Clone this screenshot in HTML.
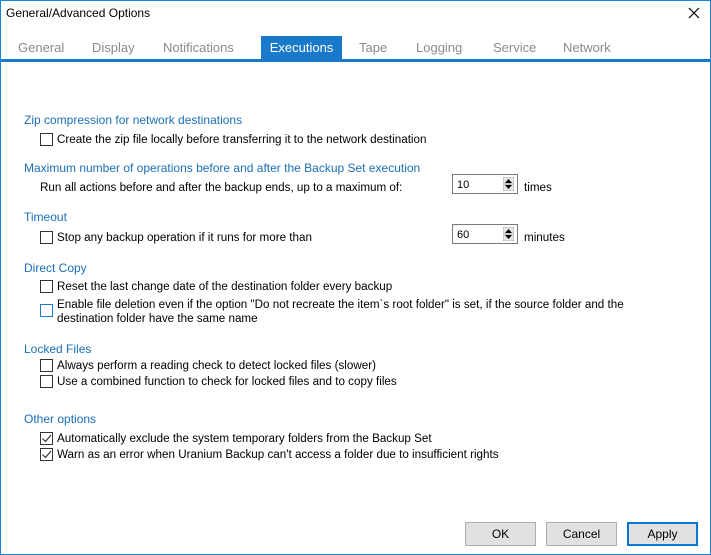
<!DOCTYPE html><html><head><style>
body{margin:0;width:711px;height:555px;overflow:hidden;font-family:"Liberation Sans",sans-serif;background:#fff;position:relative}
.win{position:absolute;left:0;top:0;width:709px;height:553px;border:1px solid #1883d7}
.a{position:absolute;white-space:nowrap}
.t{font-size:11.65px;color:#000;margin-top:1px}
.h{font-size:12px;color:#1a6fb9}
.tab{position:absolute;top:36px;height:24px;line-height:24px;font-size:13px;color:#8a8a8a}
.cb{position:absolute;width:11px;height:11px;border:1px solid #333;background:#fff}
.cb svg{position:absolute;left:0;top:0}
.spin{position:absolute;width:66px;height:20px;border:1px solid #7a7a7a;font-size:11px;line-height:20px;padding-left:4px;box-sizing:border-box}
.arr{position:absolute;right:3px;top:2px;width:11px;height:14px}
.btn{position:absolute;top:522px;height:24px;width:71px;border:1px solid #adadad;background:#e1e1e1;font-size:12px;text-align:center;line-height:22px;box-sizing:border-box}
</style></head><body><div class="win"></div>
<div class="a" style="left:6px;top:6px;font-size:12px">General/Advanced Options</div>
<svg class="a" style="left:688px;top:7px" width="12" height="12"><path d="M1 1L11 11M11 1L1 11" stroke="#000" stroke-width="1.2"/></svg>
<div class="tab" style="left:18px">General</div>
<div class="tab" style="left:92px">Display</div>
<div class="tab" style="left:163px">Notifications</div>
<div class="tab" style="left:261px;width:81px;background:#1979ca;color:#fff;text-align:center">Executions</div>
<div class="tab" style="left:359px">Tape</div>
<div class="tab" style="left:416px">Logging</div>
<div class="tab" style="left:493px">Service</div>
<div class="tab" style="left:563px">Network</div>
<div class="a" style="left:1px;top:59px;width:709px;height:3px;background:#1979ca"></div>

<div class="a h" style="left:24px;top:113px">Zip compression for network destinations</div>
<div class="cb" style="left:40px;top:133px"></div><div class="a t" style="left:57px;top:132px">Create the zip file locally before transferring it to the network destination</div>

<div class="a h" style="left:24px;top:161px">Maximum number of operations before and after the Backup Set execution</div>
<div class="a t" style="left:40px;top:180px">Run all actions before and after the backup ends, up to a maximum of:</div>
<div class="spin" style="left:452px;top:174px">10<svg class="arr" viewBox="0 0 11 14"><rect width="11" height="14" fill="#e6e6e6" stroke="#888" stroke-width=".6"/><path d="M2 6L5.5 2L9 6Z M2 8L5.5 12L9 8Z" fill="#000"/><path d="M1 7H10" stroke="#888" stroke-width=".6"/></svg></div>
<div class="a t" style="left:524px;top:180px">times</div>

<div class="a h" style="left:24px;top:210px">Timeout</div>
<div class="cb" style="left:40px;top:231px"></div><div class="a t" style="left:57px;top:230px">Stop any backup operation if it runs for more than</div>
<div class="spin" style="left:452px;top:224px">60<svg class="arr" viewBox="0 0 11 14"><rect width="11" height="14" fill="#e6e6e6" stroke="#888" stroke-width=".6"/><path d="M2 6L5.5 2L9 6Z M2 8L5.5 12L9 8Z" fill="#000"/><path d="M1 7H10" stroke="#888" stroke-width=".6"/></svg></div>
<div class="a t" style="left:524px;top:230px">minutes</div>

<div class="a h" style="left:24px;top:261px">Direct Copy</div>
<div class="cb" style="left:40px;top:280px"></div><div class="a t" style="left:57px;top:279px">Reset the last change date of the destination folder every backup</div>
<div class="cb" style="left:40px;top:304px;border-color:#1979ca"></div><div class="a t" style="left:57px;top:297px;line-height:14px">Enable file deletion even if the option "Do not recreate the item`s root folder" is set, if the source folder and the<br>destination folder have the same name</div>

<div class="a h" style="left:24px;top:342px">Locked Files</div>
<div class="cb" style="left:40px;top:359px"></div><div class="a t" style="left:57px;top:358px">Always perform a reading check to detect locked files (slower)</div>
<div class="cb" style="left:40px;top:375px"></div><div class="a t" style="left:57px;top:374px">Use a combined function to check for locked files and to copy files</div>

<div class="a h" style="left:24px;top:412px">Other options</div>
<div class="cb" style="left:40px;top:432px"><svg width="11" height="11"><path d="M1.5 5.5L4.5 8.5L10 2" fill="none" stroke="#333" stroke-width="1.2"/></svg></div><div class="a t" style="left:57px;top:431px">Automatically exclude the system temporary folders from the Backup Set</div>
<div class="cb" style="left:40px;top:448px"><svg width="11" height="11"><path d="M1.5 5.5L4.5 8.5L10 2" fill="none" stroke="#333" stroke-width="1.2"/></svg></div><div class="a t" style="left:57px;top:447px">Warn as an error when Uranium Backup can't access a folder due to insufficient rights</div>

<div class="btn" style="left:465px">OK</div>
<div class="btn" style="left:546px">Cancel</div>
<div class="btn" style="left:627px;border:2px solid #0078d7;line-height:20px">Apply</div>
</body></html>
